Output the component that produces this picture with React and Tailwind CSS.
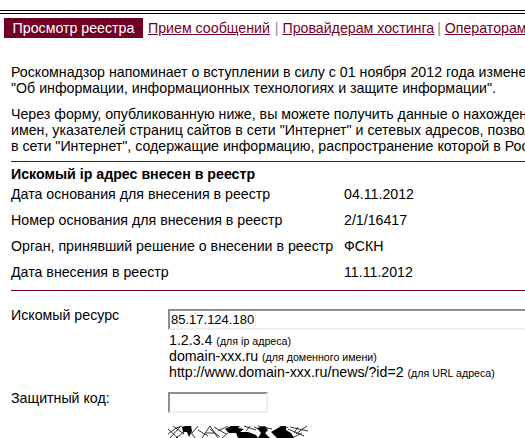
const rows = [
  ['Дата основания для внесения в реестр', '04.11.2012'],
  ['Номер основания для внесения в реестр', '2/1/16417'],
  ['Орган, принявший решение о внесении в реестр', 'ФСКН'],
  ['Дата внесения в реестр', '11.11.2012'],
]

function Captcha() {
  return (
    <svg width="140" height="13" viewBox="0 0 140 13" className="block">
      <g fill="none" stroke="#000" strokeWidth="0.8">
        <path d="M0 9 L8 3 L14 1 M0 4 L10 13 M2 13 L12 2 M5 1 L16 9 M18 1 L27 13 M30 1 L24 8 M8 13 L20 4" />
        <path d="M34 13 L42 1 L50 13 M38 8 L47 8 M46 2 L58 9 M50 6 L60 1 M54 13 L60 8 M42 4 L52 12 M30 5 L40 11" />
        <path d="M76 1 L88 5 M82 1 L78 6 M86 2 L98 7 M90 1 L104 4 M108 8 L120 2 M122 2 L140 6 M128 9 L139 1 M124 13 L134 8 M120 4 L136 11 M130 2 L126 8" />
      </g>
      <g fill="#000">
        <path d="M14 2 L17 1 L23 1 L24 6 L21 12 L19 7 L15 7 Z" />
        <path d="M57 4 L63 1 L72 1 L70 3 L76 4 L72 7 L80 7 L88 10 L90 13 L70 13 L68 8 L61 8 Z" />
        <path d="M89 3 L97 1 L100 5 L97 8 L102 13 L90 13 L93 8 Z" />
        <path d="M103 7 L110 3 L113 1 L118 1 L118 5 L123 8 L126 13 L109 13 Z" />
      </g>
    </svg>
  )
}

export default function App() {
  return (
    <div className="h-[438px] w-[525px] overflow-hidden bg-white text-[14.2px] leading-4 text-black font-['Liberation_Sans',Arial,sans-serif]">
      <div className="mt-[10px] h-1 border-y border-black" />

      <nav className="mt-1 ml-1 flex h-5 items-center whitespace-nowrap">
        <span className="flex h-5 w-[139px] shrink-0 items-center justify-center bg-[#720026] text-white">Просмотр реестра</span>
        <div className="ml-[5px] text-[#8a8a9a]">
          <a href="#" className="text-[#720026] underline">Прием сообщений</a>
          <span className="ml-px">{' | '}</span>
          <a href="#" className="text-[#720026] underline">Провайдерам хостинга</a>
          <span className="-ml-px">{' | '}</span>
          <a href="#" className="text-[#720026] underline">Операторам связи</a>
        </div>
      </nav>

      <div className="mt-[26px] ml-[11px] whitespace-nowrap">
        <p>Роскомнадзор напоминает о вступлении в силу с 01 ноября 2012 года изменений</p>
        <p>"Об информации, информационных технологиях и защите информации".</p>
        <p className="mt-[10px]">Через форму, опубликованную ниже, вы можете получить данные о нахождении</p>
        <p>имен, указателей страниц сайтов в сети "Интернет" и сетевых адресов, позволяющих</p>
        <p>в сети "Интернет", содержащие информацию, распространение которой в России</p>
      </div>

      <div className="mt-[7px] ml-[11px] border-t border-[#720026] pt-1">
        <h2 className="font-bold">Искомый ip адрес внесен в реестр</h2>
        <div className="mt-1 flex flex-col gap-2.5">
          {rows.map(([label, value]) => (
            <div key={label} className="flex whitespace-nowrap">
              <span className="w-[333px]">{label}</span>
              <span>{value}</span>
            </div>
          ))}
        </div>
      </div>

      <div className="mt-[10px] ml-[11px] border-t border-[#720026]" />

      <form className="mt-4 ml-[11px]">
        <div className="flex">
          <label className="w-[158px]">Искомый ресурс</label>
          <div className="min-w-0 flex-1">
            <input
              defaultValue="85.17.124.180"
              className="mt-0.5 -ml-px h-[21px] w-[400px] border-2 border-t-[#8e8e8e] border-l-[#8e8e8e] border-r-[#eeeeee] border-b-[#eeeeee] pl-px text-[13px] text-black outline-none"
            />
            <div className="mt-[2px] whitespace-nowrap">
              <p>1.2.3.4 <span className="text-[10.65px] leading-[10px]">(для ip адреса)</span></p>
              <p>domain-xxx.ru <span className="text-[10.65px] leading-[10px]">(для доменного имени)</span></p>
              <p>http://www.domain-xxx.ru/news/?id=2 <span className="text-[10.65px] leading-[10px]">(для URL адреса)</span></p>
            </div>
          </div>
        </div>
        <div className="mt-[10px] flex">
          <label className="w-[158px]">Защитный код:</label>
          <div className="-ml-px">
            <input className="mt-0.5 block h-[21px] w-[100px] border-2 border-t-[#8e8e8e] border-l-[#8e8e8e] border-r-[#eeeeee] border-b-[#eeeeee] outline-none" />
            <div className="mt-3"><Captcha /></div>
          </div>
        </div>
      </form>
    </div>
  )
}
